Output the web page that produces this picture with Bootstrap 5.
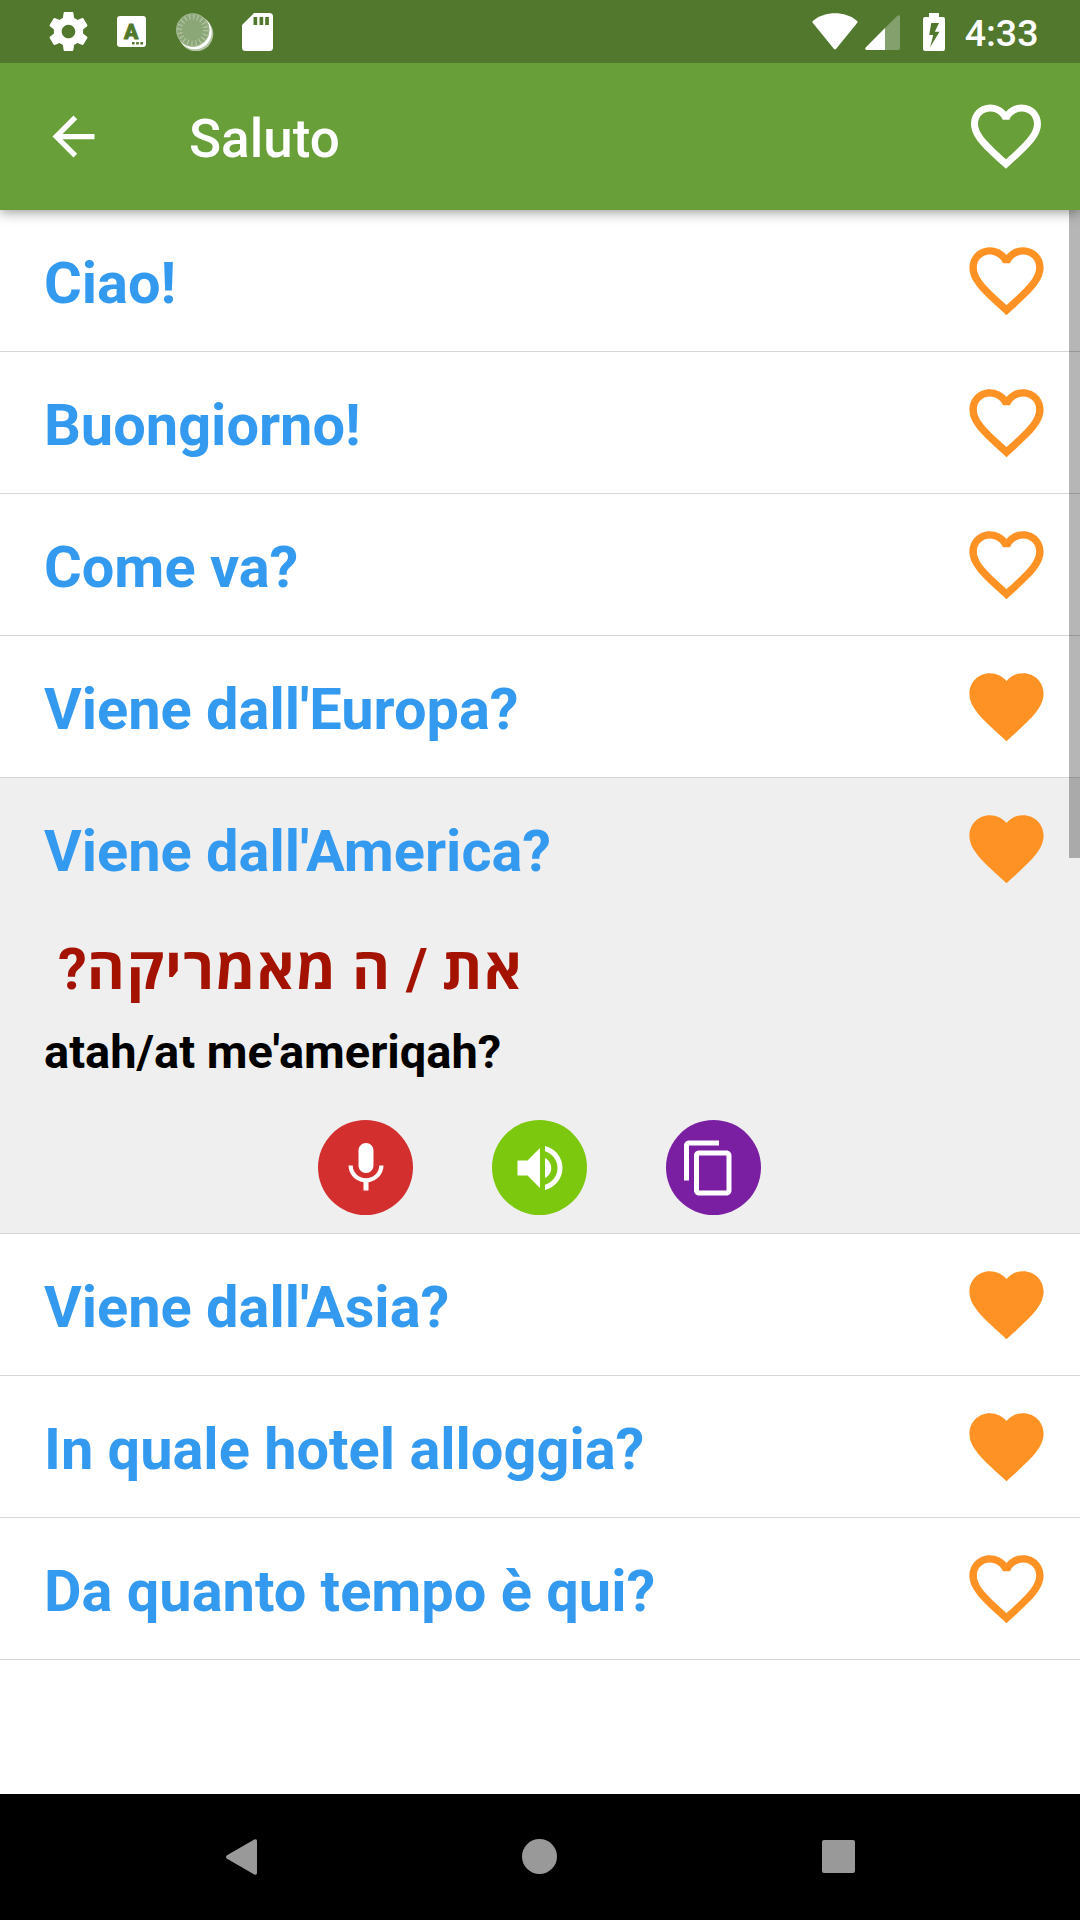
<!DOCTYPE html>
<html lang="it">
<head>
<meta charset="utf-8">
<meta name="viewport" content="width=device-width, initial-scale=1">
<title>Saluto</title>
<link href="https://cdn.jsdelivr.net/npm/bootstrap@5.3.0/dist/css/bootstrap.min.css" rel="stylesheet">
<style>
body{font-family:Roboto,"Open Sans",sans-serif;background:#fff}
.screen{width:1080px;height:1920px}
svg{display:block;flex:none}
.statusbar{height:63px;background:#51782c;color:#fff;padding:0 41.5px 0 49px;z-index:4}
.clock{font-size:37.5px;font-weight:500;line-height:44px;padding-top:2px;margin-left:20px}
.appbar{height:147px;background:#689f38;color:#fff;padding:0 32px 0 41.5px;z-index:3;box-shadow:0 2px 12px rgba(0,0,0,.42)}
.appbar-title{font-size:53px;font-weight:500;line-height:60px;padding-top:5px;margin:0 auto 0 84.5px}
.appbar-fav{margin-top:-2px}
.phrases{height:1584px}
.phrase{border-bottom:1px solid #d6d6d6}
.phrase-head{height:141px;padding:5px 29px 0 44px}
.phrase-head svg{margin-top:-6px}
.phrase-title{font-size:57.75px;font-weight:700;line-height:68px;letter-spacing:-.01px;color:#339af0}
.opened{background:#efefef;height:456px}
.hebrew{font-size:58px;font-weight:700;line-height:68px;color:#a31300;padding:16px 0 0 58px}
.hebrew b{font-weight:700;letter-spacing:1.5px}
.latin{font-size:47px;font-weight:700;line-height:56px;color:#000;padding:21px 0 0 44px}
.actions{gap:79px;margin:40px 1px 0 0}
.round{width:95px;height:95px}
.thumb{right:0;top:0;width:11px;height:648px;background:rgba(0,0,0,.285);z-index:2}
.navkeys{height:126px;background:#000;padding:0 225.5px 1px}
.badge-letter{font:900 21px Roboto,sans-serif;text-anchor:middle}
</style>
<script src="https://cdn.jsdelivr.net/npm/bootstrap@5.3.0/dist/js/bootstrap.bundle.min.js"></script>
</head>
<body>
<svg width="0" height="0" class="position-absolute">
<symbol id="heart-line" viewBox="0 0 24 24"><path d="M16.5 3c-1.74 0-3.41.81-4.5 2.09C10.91 3.81 9.24 3 7.5 3 4.42 3 2 5.42 2 8.5c0 3.78 3.4 6.86 8.55 11.54L12 21.35l1.45-1.32C18.6 15.36 22 12.28 22 8.5 22 5.42 19.58 3 16.5 3zm-4.4 15.55l-.1.1-.1-.1C7.14 14.24 4 11.39 4 8.5 4 6.5 5.5 5 7.5 5c1.54 0 3.04.99 3.57 2.36h1.87C13.46 5.99 14.96 5 16.5 5c2 0 3.5 1.5 3.5 3.5 0 2.89-3.14 5.74-7.9 10.05z"/></symbol>
<symbol id="heart-full" viewBox="0 0 24 24"><path d="M12 21.35l-1.45-1.32C5.4 15.36 2 12.28 2 8.5 2 5.42 4.42 3 7.5 3c1.74 0 3.41.81 4.5 2.09C13.09 3.81 14.76 3 16.5 3 19.58 3 22 5.42 22 8.5c0 3.78-3.4 6.86-8.55 11.54L12 21.35z"/></symbol>
</svg>
<div class="screen d-flex flex-column overflow-hidden">
  <div class="statusbar d-flex align-items-center position-relative">
    <svg width="39" height="39" viewBox="2 2 20 20" fill="#fff"><path d="M19.43 12.98c.04-.32.07-.64.07-.98s-.03-.66-.07-.98l2.11-1.65c.19-.15.24-.42.12-.64l-2-3.46c-.12-.22-.39-.3-.61-.22l-2.49 1c-.52-.4-1.08-.73-1.69-.98l-.38-2.65C14.46 2.18 14.25 2 14 2h-4c-.25 0-.46.18-.49.42l-.38 2.65c-.61.25-1.17.59-1.69.98l-2.49-1c-.23-.09-.49 0-.61.22l-2 3.46c-.13.22-.07.49.12.64l2.11 1.65c-.04.32-.07.65-.07.98s.03.66.07.98l-2.11 1.65c-.19.15-.24.42-.12.64l2 3.46c.12.22.39.3.61.22l2.49-1c.52.4 1.08.73 1.69.98l.38 2.65c.03.24.24.42.49.42h4c.25 0 .46-.18.49-.42l.38-2.65c.61-.25 1.17-.59 1.69-.98l2.49 1c.23.09.49 0 .61-.22l2-3.46c.12-.22.07-.49-.12-.64l-2.11-1.65zM12 15.5c-1.93 0-3.5-1.57-3.5-3.5s1.57-3.5 3.5-3.5 3.5 1.57 3.5 3.5-1.57 3.5-3.5 3.5z"/></svg>
    <svg width="29" height="31" viewBox="0 0 29 31" style="margin-left:29px"><rect width="29" height="31" rx="3" fill="#fff"/><text x="14.200" y="22.500" class="badge-letter" fill="#51782c" stroke="#51782c" stroke-width=".8" stroke-linejoin="round">A</text><path d="M15 26h2.600v2.600H15zm4.200 0h2.600v2.600h-2.600zm4.200 0h2.600v2.600h-2.600z" fill="#51782c"/></svg>
    <svg width="38" height="38" viewBox="0 0 38 38" style="margin-left:30px"><circle cx="20" cy="21" r="17.3" fill="#b4c5a4"/><circle cx="18.7" cy="19.3" r="17" fill="#fff"/><circle cx="16.7" cy="17" r="16.7" fill="#8ca777"/><circle cx="16.7" cy="17" r="13.2" fill="none" stroke="#b4c5a4" stroke-width="5.5" stroke-dasharray="1.2 2.948"/><circle cx="16.7" cy="17" r="16.2" fill="none" stroke="#9fb58d"/></svg>
    <svg width="31" height="38" viewBox="0 0 31 38" fill="#fff" style="margin-left:28px"><path fill-rule="evenodd" d="M12 0h15.5Q31 0 31 3.5v31Q31 38 27.500 38h-24Q0 38 0 34.500V12zM11.500 4v8h3.700V4zM17.500 4v8h3.700V4zM23.200 4v8h3.700V4z"/></svg>
    <svg width="46" height="37" viewBox="0 0 46 37" fill="#fff" class="ms-auto"><path d="M.8 8C13-2.300 33-2.300 45.200 8q.8.800.1 1.700L24.200 35.800q-1.200 1.200-2.400 0L.7 9.700Q0 8.800.8 8z"/></svg>
    <svg width="35" height="35" viewBox="0 0 35 35" style="margin:2px 0 0 7px"><path d="M20 13 32.300.7Q35-.9 35 2v31q0 2-2 2H20z" fill="#84a06c"/><path d="M20 13v22H1.500Q-.8 34.300.7 32.500z" fill="#fff"/></svg>
    <svg width="22" height="38" viewBox="0 0 22 38" fill="#fff" style="margin-left:23px"><path fill-rule="evenodd" d="M6 0h10v4h4q2 0 2 2v30q0 2-2 2H2q-2 0-2-2V6q0-2 2-2h4zM8.300 10 6.200 22h4L7.200 34 16.500 18.700h-4.700L16 10z"/></svg>
    <span class="clock">4:33</span>
  </div>
  <header class="appbar d-flex align-items-center position-relative">
    <svg width="63" height="63" viewBox="0 0 24 24" fill="#fff"><path d="M20 11H7.830l5.590-5.590L12 4l-8 8 8 8 1.410-1.410L7.830 13H20v-2z"/></svg>
    <h1 class="appbar-title">Saluto</h1>
    <svg class="appbar-fav" width="84" height="84" fill="#fff"><use href="#heart-line"/></svg>
  </header>
  <main class="phrases position-relative">
    <div class="thumb position-absolute"></div>
    <div class="phrase"><div class="phrase-head d-flex align-items-center justify-content-between"><span class="phrase-title">Ciao!</span><svg width="89" height="89" fill="#ff9224"><use href="#heart-line"/></svg></div></div>
    <div class="phrase"><div class="phrase-head d-flex align-items-center justify-content-between"><span class="phrase-title">Buongiorno!</span><svg width="89" height="89" fill="#ff9224"><use href="#heart-line"/></svg></div></div>
    <div class="phrase"><div class="phrase-head d-flex align-items-center justify-content-between"><span class="phrase-title">Come va?</span><svg width="89" height="89" fill="#ff9224"><use href="#heart-line"/></svg></div></div>
    <div class="phrase"><div class="phrase-head d-flex align-items-center justify-content-between"><span class="phrase-title">Viene dall'Europa?</span><svg width="89" height="89" fill="#ff9224"><use href="#heart-full"/></svg></div></div>
    <div class="phrase opened">
      <div class="phrase-head d-flex align-items-center justify-content-between"><span class="phrase-title">Viene dall'America?</span><svg width="89" height="89" fill="#ff9224"><use href="#heart-full"/></svg></div>
      <div class="hebrew d-flex"><span dir="rtl" lang="he"><b>את</b> / <b>ה</b> <b>מאמריקה</b>?</span></div>
      <div class="latin">atah/at me'ameriqah?</div>
      <div class="actions d-flex justify-content-center">
        <div class="round rounded-circle d-flex align-items-center justify-content-center" style="background:#d32f2f"><svg width="60" height="60" viewBox="0 0 24 24" fill="#fff"><path d="M12 14c1.660 0 2.990-1.340 2.990-3L15 5c0-1.660-1.340-3-3-3S9 3.340 9 5v6c0 1.660 1.340 3 3 3zm5.300-3c0 3-2.540 5.100-5.300 5.100S6.700 14 6.700 11H5c0 3.410 2.720 6.230 6 6.720V21h2v-3.280c3.280-.48 6-3.300 6-6.720h-1.700z"/></svg></div>
        <div class="round rounded-circle d-flex align-items-center justify-content-center" style="background:#7cc80e"><svg width="60" height="60" viewBox="0 0 24 24" fill="#fff"><path d="M3 9v6h4l5 5V4L7 9H3zm13.500 3c0-1.770-1.020-3.290-2.500-4.030v8.050c1.480-.73 2.500-2.250 2.500-4.020zM14 3.230v2.060c2.890.86 5 3.540 5 6.710s-2.110 5.850-5 6.710v2.060c4.010-.91 7-4.490 7-8.770s-2.990-7.860-7-8.770z"/></svg></div>
        <div class="round rounded-circle d-flex align-items-center justify-content-center" style="background:#7b1fa2"><svg width="60" height="60" viewBox="0 0 24 24" fill="#fff" style="margin-right:9px"><path d="M16 1H4c-1.100 0-2 .9-2 2v14h2V3h12V1zm3 4H8c-1.100 0-2 .9-2 2v14c0 1.100.9 2 2 2h11c1.100 0 2-.9 2-2V7c0-1.100-.9-2-2-2zm0 16H8V7h11v14z"/></svg></div>
      </div>
    </div>
    <div class="phrase"><div class="phrase-head d-flex align-items-center justify-content-between"><span class="phrase-title">Viene dall'Asia?</span><svg width="89" height="89" fill="#ff9224"><use href="#heart-full"/></svg></div></div>
    <div class="phrase"><div class="phrase-head d-flex align-items-center justify-content-between"><span class="phrase-title">In quale hotel alloggia?</span><svg width="89" height="89" fill="#ff9224"><use href="#heart-full"/></svg></div></div>
    <div class="phrase"><div class="phrase-head d-flex align-items-center justify-content-between"><span class="phrase-title">Da quanto tempo è qui?</span><svg width="89" height="89" fill="#ff9224"><use href="#heart-line"/></svg></div></div>
  </main>
  <nav class="navkeys d-flex align-items-center justify-content-between">
    <svg width="31" height="36" viewBox="0 0 31 36" fill="#999"><path d="M28.300.5Q31-.6 31 2v32q0 2.600-2.700 1.500L1 19.800q-2-1.800 0-3.600z"/></svg>
    <svg width="35" height="35" viewBox="0 0 35 35" fill="#999"><circle cx="17.500" cy="17.500" r="17.500"/></svg>
    <svg width="33" height="33" viewBox="0 0 33 33" fill="#999"><rect width="33" height="33" rx="2"/></svg>
  </nav>
</div>
</body>
</html>
